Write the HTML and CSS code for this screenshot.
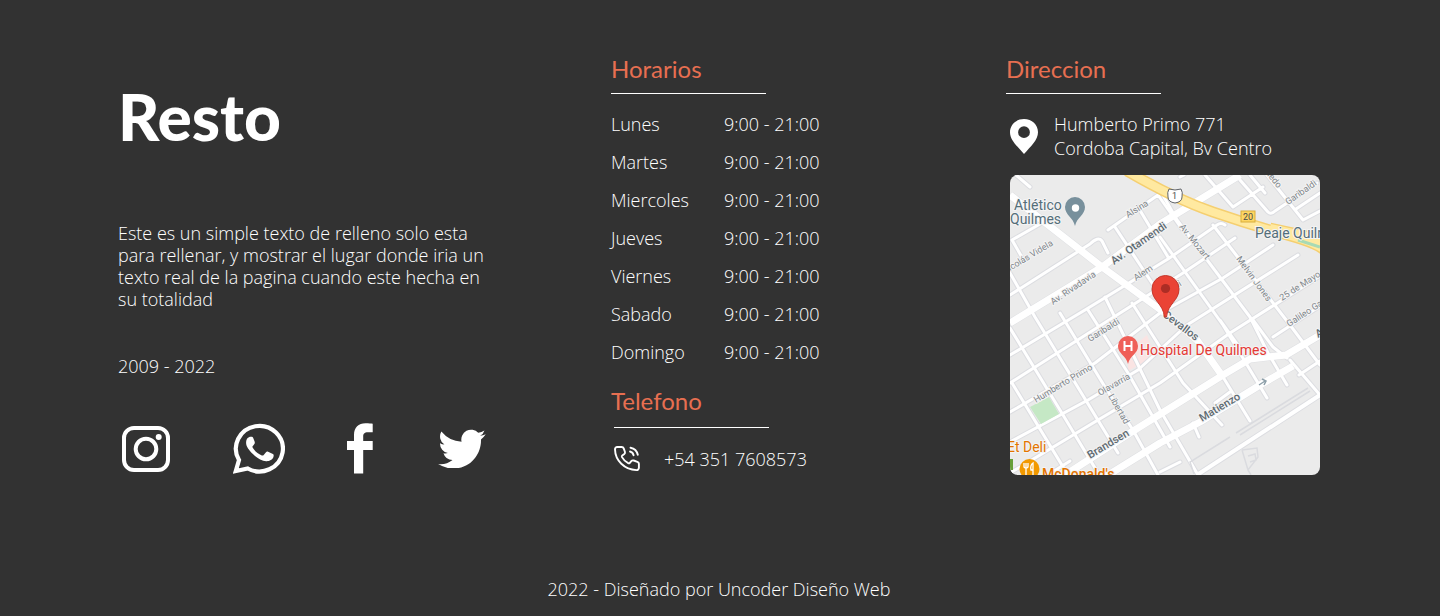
FILE: index.html
```html
<!DOCTYPE html>
<html lang="es">
<head>
<meta charset="utf-8">
<meta name="viewport" content="width=device-width, initial-scale=1">
<title>Resto</title>
<link rel="stylesheet" href="styles.css">
</head>
<body>
<footer class="footer">
  <div class="columns">
    <section class="about">
      <div class="logo">Resto</div>
      <p class="about-text">Este es un simple texto de relleno solo esta para rellenar, y mostrar el lugar donde iria un texto real de la pagina cuando este hecha en su totalidad</p>
      <p class="years">2009 - 2022</p>
      <nav class="social" aria-label="Redes sociales">
        <a href="#" aria-label="Instagram"><svg width="48" height="46" viewBox="0 0 48 46"><rect x="2" y="2" width="44" height="42" rx="10" fill="none" stroke="#fff" stroke-width="4"/><circle cx="24" cy="23" r="10.300" fill="none" stroke="#fff" stroke-width="4"/><circle cx="36.700" cy="11" r="3" fill="#fff"/></svg></a>
        <a href="#" aria-label="WhatsApp"><svg width="52" height="51" viewBox="0 0 52 51"><path d="M2.800 48 6 37A23.500 22.800 0 1 1 14.800 45.500Z" fill="none" stroke="#fff" stroke-width="4.200"/><path d="M14.200 15.500c1.500-1.800 3.200-2 4.700-1.700 1 .2 1.400 1.200 2.600 4.500.7 1.900.3 2.300-1.700 4.700-.6.700-.5 1.100.1 2 2.300 3.600 5.100 6 8.900 7.400.8.300 1.300.2 1.900-.5l2.300-2.700c.6-.8 1.200-.9 2.100-.5l4.800 2.400c1 .5.9 1.600.5 3-.8 3-4.600 4.400-7.200 4.100-4.100-.5-9.200-2.900-13.300-7.100-3.800-4-6.800-7.700-6.800-11.200 0-1.700.3-3.200 1.100-4.400z" fill="#fff"/></svg></a>
        <a href="#" aria-label="Facebook"><svg width="28" height="51" viewBox="0 0 28 51"><path d="M7 50.500V27H0v-9h7v-6C7 4.500 11.500.3 18.500.3c3.300 0 6 .2 7.200.4v8.500H21c-3.800 0-4.800 1.700-4.800 4.300V18h9.500v9h-9.500v23.500z" fill="#fff"/></svg></a>
        <a href="#" aria-label="Twitter"><svg width="48" height="39" viewBox="0 1.900 24 19.600"><path d="M23.950 4.570a10 10 0 0 1-2.820.770 4.960 4.960 0 0 0 2.160-2.720 9.900 9.900 0 0 1-3.120 1.190 4.920 4.920 0 0 0-8.390 4.480A13.900 13.900 0 0 1 1.640 3.160a4.920 4.920 0 0 0 1.520 6.570 4.900 4.900 0 0 1-2.230-.61v.06a4.920 4.920 0 0 0 3.950 4.830 5 5 0 0 1-2.210.080 4.940 4.940 0 0 0 4.600 3.420A9.870 9.870 0 0 1 0 19.540a14 14 0 0 0 7.550 2.210c9.050 0 14-7.500 14-13.990 0-.21 0-.42-.02-.63a9.940 9.940 0 0 0 2.420-2.560z" fill="#fff"/></svg></a>
      </nav>
    </section>

    <section class="info">
      <h2 class="title">Horarios</h2>
      <hr class="rule">
      <table class="hours">
        <tr><th scope="row">Lunes</th><td>9:00 - 21:00</td></tr>
        <tr><th scope="row">Martes</th><td>9:00 - 21:00</td></tr>
        <tr><th scope="row">Miercoles</th><td>9:00 - 21:00</td></tr>
        <tr><th scope="row">Jueves</th><td>9:00 - 21:00</td></tr>
        <tr><th scope="row">Viernes</th><td>9:00 - 21:00</td></tr>
        <tr><th scope="row">Sabado</th><td>9:00 - 21:00</td></tr>
        <tr><th scope="row">Domingo</th><td>9:00 - 21:00</td></tr>
      </table>
      <h2 class="title">Telefono</h2>
      <div class="phone-block">
        <hr class="rule">
        <p class="phone"><svg width="26" height="26" viewBox="0 0 26 26" fill="none" stroke="#fff" stroke-width="1.900" stroke-linecap="round" stroke-linejoin="round"><path d="M1 3.200C1 2 2 1 3.200 1h4.500c.9 0 1.700.6 2 1.400l1.200 3.300c.3.900 0 1.800-.6 2.300l-2 1.500c-.5.400-.6 1-.3 1.600 1.500 2.700 3.600 4.800 6.200 6.100.6.300 1.200.1 1.600-.4l1.500-1.700c.6-.7 1.500-.9 2.400-.6l3.700 1.300c.9.300 1.500 1.100 1.500 2v4c0 1.400-1.100 2.400-2.500 2.300C10.500 23.600 1.200 14.600 1 3.200z"/><path d="M16 5.500c1.800.5 3.200 1.900 3.600 3.800M16.500 1.700c3.700.7 6.500 3.400 7.300 7.100"/></svg><span>+54 351 7608573</span></p>
      </div>
    </section>

    <section class="location">
      <h2 class="title">Direccion</h2>
      <hr class="rule">
      <address class="address">
        <svg width="28" height="35" viewBox="0 0 28 35"><path fill-rule="evenodd" d="M14 0C6 0 0 5.800 0 13.200 0 21 7 27 14 35c7-8 14-14 14-21.800C28 5.800 22 0 14 0zm0 7.300a5.900 5.900 0 1 1 0 11.800 5.900 5.900 0 0 1 0-11.800z" fill="#fff"/></svg>
        <span>Humberto Primo 771<br>Cordoba Capital, Bv Centro</span>
      </address>
      <svg class="map" viewBox="0 0 310 300" role="img" aria-label="Mapa">
        <defs>
          <g id="streets" fill="none" stroke-linejoin="round" stroke-linecap="round">
            <path d="M6 0 20 12M2 65 30 49M2 65 13 84M0 120 80 69Q88 61 92 66L98 78M98 55 148 20 172 54M105 52 150 120M128 32 158 82M0 180 75 135 158 84 207 50Q211 47 215 50M0 208 173 98 225 63M0 237 85 188 150 138 213 103 263 70M0 267 78 225 128 195 177 150 288 80M0 298 88 245 150 208 220 158 310 101M0 324 60 286M205 228 220 217M263 162 310 131M150 297 170 287"/>
            <path d="M2 208 58 300M0 153 50 235 88 298M0 98 25 142 108 278M50 138 95 212 123 255 148 300M78 135 118 198 160 272M95 122 150 235 188 300M122 128 173 208 212 250M183 248 189 262M150 15 167 45 240 142 258 178 277 210M150 62 213 150 257 223M203 50 230 85 280 150 310 190M210 145 230 173M243 145 263 172 277 183M195 0 223 32 253 12M230 5 258 37Q261 40 265 36L307 8M257 0 293 45 310 36M286 34 310 18M240 0 255 18M170 2 174 0M213 202 240 246M280 185 310 220M289 200 310 186"/>
          </g>
          <g id="avenues" fill="none" stroke-linejoin="round">
            <path d="M0 20 92 92 155 138 187 165 213 202M230 0 150 49 92 92 0 148M52 302 120 258 213 200 240 184 276 180 310 160M95 302 150 268 190 247 250 210 283 191"/>
          </g>
          <path id="highway" fill="none" d="M117-4Q165 24 203 37T277 60 315 77M260 53 315 65"/>
        </defs>
        <rect width="310" height="300" fill="#ebebeb"/>
        <path d="M118 176 137 160 145 181 118 196z" fill="#fae4e3"/>
        <use href="#streets" stroke="#dcdde1" stroke-width="5"/>
        <use href="#avenues" stroke="#dfe0e3" stroke-width="8"/>
        <path d="M187 300 310 220" stroke="#dcdde1" stroke-width="6"/>
        <use href="#streets" stroke="#fff" stroke-width="3"/>
        <use href="#avenues" stroke="#fff" stroke-width="7"/>
        <path d="M187 300 310 220" stroke="#fff" stroke-width="4"/>
        <path d="M184 299 180 287 220 262M226 258 298 213M230 260 300 216M232 275 238 295 248 282 247 273 232 275M238 281 245 279 246 285 240 287M238 295 241 300" fill="none" stroke="#dadbdf" stroke-width="1.500"/>
        <use href="#highway" stroke="#f5cf70" stroke-width="11"/>
        <use href="#highway" stroke="#ffe9a0" stroke-width="8"/>
        <path d="M288 65 310 72" stroke="#a8dab5" stroke-width="3"/>
        <path d="M20 232 39 222 49 239 31 249z" fill="#c5e8c5"/>
        <path d="M159 14q6 2 12 0 2 3 1 8 0 5-7 6-7-1-7-6-1-5 1-8z" fill="#fff" stroke="#5f6368"/>
        <text class="map-small" x="162" y="24">1</text>
        <rect x="231" y="36" width="14" height="11" fill="#fdd663" stroke="#d9ae3d"/>
        <text class="map-small" x="233" y="45">20</text>
        <g class="map-street">
          <text transform="translate(118 43) rotate(-32)">Alsina</text>
          <text transform="translate(0 96) rotate(-31)">icolás Videla</text>
          <text transform="translate(43 130) rotate(-34)">Av. Rivadavia</text>
          <text transform="translate(126 106) rotate(-33)">Alem</text>
          <text transform="translate(80 167) rotate(-32)">Garibaldi</text>
          <text transform="translate(164 115) rotate(-32)">ldi</text>
          <text transform="translate(26 228) rotate(-31)">Humberto Primo</text>
          <text transform="translate(90 221) rotate(-30)">Olavarría</text>
          <text transform="translate(98 221) rotate(60)">Libertad</text>
          <text transform="translate(169 52) rotate(51)">Av. Mozart</text>
          <text transform="translate(226 84) rotate(54)">Melvin Jones</text>
          <text transform="translate(257 0) rotate(52)">iedo</text>
          <text transform="translate(278 30) rotate(-35)">Garibaldi</text>
          <text transform="translate(272 126) rotate(-33)">25 de Mayo</text>
          <text transform="translate(279 152) rotate(-33)">Galileo Ga</text>
        </g>
        <g class="map-avenue">
          <text transform="translate(104 90) rotate(-35)">Av. Otamendi</text>
          <text transform="translate(152 141) rotate(37)">Cevallos</text>
          <text transform="translate(80 284) rotate(-31)">Brandsen</text>
          <text transform="translate(192 247) rotate(-31)">Matienzo</text>
          <text transform="translate(308 163) rotate(-31)">A</text>
        </g>
        <path d="M249 210 255 206M252 204 256 206 254 210" fill="none" stroke="#8ea0aa" stroke-width="1.500"/>
        <g class="map-place">
          <text x="4" y="35">Atlético</text><text x="0" y="49">Quilmes</text>
          <text x="245" y="63">Peaje Quilm</text>
        </g>
        <path d="M65 51C63 42 55 40 55 32a10 10 0 0 1 20 0C75 40 67 42 65 51z" fill="#78909c"/>
        <circle cx="65.500" cy="33" r="3.700" fill="#fff"/>
        <path d="M118 189C116 180 108 179 108 171a10 10 0 0 1 20 0C128 179 120 180 118 189z" fill="#ef5f58"/>
        <path d="M114.500 166v10M121.500 166v10M114 171h8" fill="none" stroke="#fff" stroke-width="2"/>
        <text class="map-hospital" x="130" y="180">Hospital De Quilmes</text>
        <text class="map-food" x="-3" y="277">Et Deli</text>
        <rect x="0" y="284" width="3" height="11" fill="#689f38"/>
        <circle cx="19.500" cy="294" r="10" fill="#f29900"/>
        <path d="M16 288v4M14 288v4q2 2 4 0v-4M16 293v7M23 300v-12q-3 2-2 7h2" fill="none" stroke="#fff" stroke-width="1.300"/>
        <text class="map-food map-bold" x="32" y="304">McDonald's</text>
        <path d="M154.500 142C153 128 142 126 142 114a13.500 13.500 0 0 1 27 0C169 126 158 128 156.500 142z" fill="#ea4335" stroke="#c5372c"/>
        <circle cx="155.500" cy="113.500" r="4.600" fill="#ad2d25"/>
      </svg>
    </section>
  </div>
  <p class="credits">2022 - Diseñado por Uncoder Diseño Web</p>
</footer>
</body>
</html>
```
FILE: styles.css
```css
* { box-sizing: border-box; }

body {
  margin: 0;
  background: #323232;
  color: #fff;
  font-family: "Open Sans", "Liberation Sans", sans-serif;
  font-size: 18px;
  font-weight: 300;
  line-height: 22px;
}

p { margin: 0; }

svg { display: block; flex: none; }

.footer { padding: 53px 120px 16px 118px; }

.columns {
  display: grid;
  grid-template-columns: minmax(0, 493fr) minmax(0, 395fr) minmax(0, 314fr);
}

.about { padding-top: 24px; }

.logo {
  font-family: Lato, "Liberation Sans", sans-serif;
  font-size: 64px;
  font-weight: 900;
  line-height: 80px;
}

.about-text { max-width: 376px; margin-top: 65px; }

.years { margin-top: 45px; }

.social {
  display: flex;
  align-items: center;
  justify-content: space-between;
  max-width: 368px;
  margin-top: 46px;
  padding-left: 4px;
}

.title {
  margin: 0;
  color: #e76f51;
  font-family: Lato, "Liberation Sans", sans-serif;
  font-size: 24px;
  font-weight: 400;
  line-height: 32px;
}

.rule {
  width: 155px;
  height: 1px;
  margin: 8px 0 0;
  border: 0;
  background: #fff;
}

.hours { margin: 11px 0 14px; border-collapse: collapse; }

.hours th,
.hours td { height: 38px; padding: 0; font-weight: 300; text-align: left; }

.hours th { width: 113px; }

.phone-block { padding: 2px 0 0 3px; }

.phone { display: flex; align-items: center; gap: 24px; margin-top: 18px; }

.address {
  display: flex;
  align-items: center;
  gap: 16px;
  margin-top: 18px;
  padding-left: 4px;
  font-style: normal;
  line-height: 24px;
}

.map {
  width: calc(100% - 4px);
  margin: 15px 0 0 4px;
  border-radius: 8px;
  font-family: Roboto, sans-serif;
  font-weight: 400;
}

.map text { paint-order: stroke; stroke: #f4f4f4; stroke-width: 2px; }

.map .map-small { fill: #4a4a4a; stroke: none; font-size: 9px; }

.map-street { fill: #80868b; font-size: 9px; }

.map-avenue { fill: #5f6b72; font-size: 11px; font-weight: 500; }

.map-place { fill: #546e7a; font-size: 14px; }

.map-hospital { fill: #e53935; font-size: 14px; }

.map-food { fill: #e37400; font-size: 14px; }

.map-bold { font-weight: 500; }

.credits { margin-top: 103px; text-align: center; }
```
